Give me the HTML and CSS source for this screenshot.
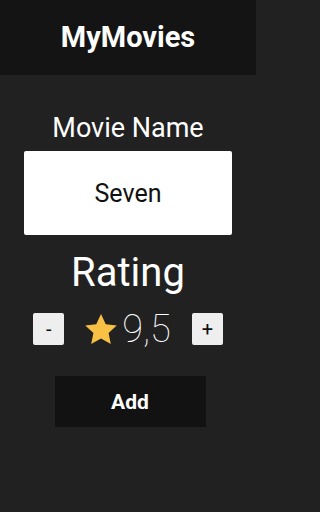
FILE: index.html
```html
<!DOCTYPE html>
<html>
<head>
<meta charset="utf-8">
<link rel="stylesheet" href="styles.css">
</head>
<body>
<header class="topbar"><h1 class="title">MyMovies</h1></header>
<main class="content">
  <div class="label">Movie Name</div>
  <div class="namebox">Seven</div>
  <div class="rating-title">Rating</div>
  <div class="rating-row">
    <button class="step">-</button>
    <div class="score">
      <svg class="star" viewBox="1.4 1.6 21.2 20.2" width="32" height="30"><path d="M12 1.6l3.2 6.9 7.4.8-5.5 5.1 1.5 7.4L12 18.1l-6.6 3.7 1.5-7.4L1.4 9.3l7.4-.8z" fill="#f8c146"/></svg>
      <span class="value">9,5</span>
    </div>
    <button class="step">+</button>
  </div>
  <button class="add">Add</button>
</main>
</body>
</html>
```
FILE: styles.css
```css
html, body { margin: 0; padding: 0; }
body {
  background: #212121;
  font-family: Roboto, "Noto Sans", sans-serif;
  color: #fff;
  width: 256px;
  height: 512px;
}
.topbar {
  height: 75px;
  background: #141414;
  display: flex;
  align-items: center;
  justify-content: center;
}
.title {
  margin: 0;
  font-size: 29px;
  font-weight: 700;
  line-height: 1;
}
.content {
  display: flex;
  flex-direction: column;
  align-items: center;
}
.label {
  margin-top: 38px;
  font-size: 27px;
  line-height: 30px;
}
.namebox {
  margin-top: 8px;
  width: 208px;
  height: 84px;
  background: #fff;
  border-radius: 2px;
  color: #111;
  font-size: 25px;
  display: flex;
  align-items: center;
  justify-content: center;
}
.rating-title {
  margin-top: 14px;
  font-size: 40px;
  line-height: 47px;
}
.rating-row {
  margin-top: 17px;
  display: flex;
  align-items: center;
  gap: 21px;
}
.step {
  width: 31px;
  height: 32px;
  border: none;
  border-radius: 2px;
  background: #eeeeee;
  color: #111;
  font-family: Roboto, sans-serif;
  font-size: 20px;
  padding: 0;
  display: flex;
  align-items: center;
  justify-content: center;
}
.score {
  display: flex;
  align-items: center;
  gap: 5px;
}
.value {
  font-size: 38px;
  font-weight: 100;
  line-height: 32px;
}
.add {
  margin-top: 31px;
  margin-left: 4px;
  width: 151px;
  height: 51px;
  border: none;
  background: #121212;
  color: #fff;
  font-family: Roboto, sans-serif;
  font-weight: 700;
  font-size: 21px;
}
```
